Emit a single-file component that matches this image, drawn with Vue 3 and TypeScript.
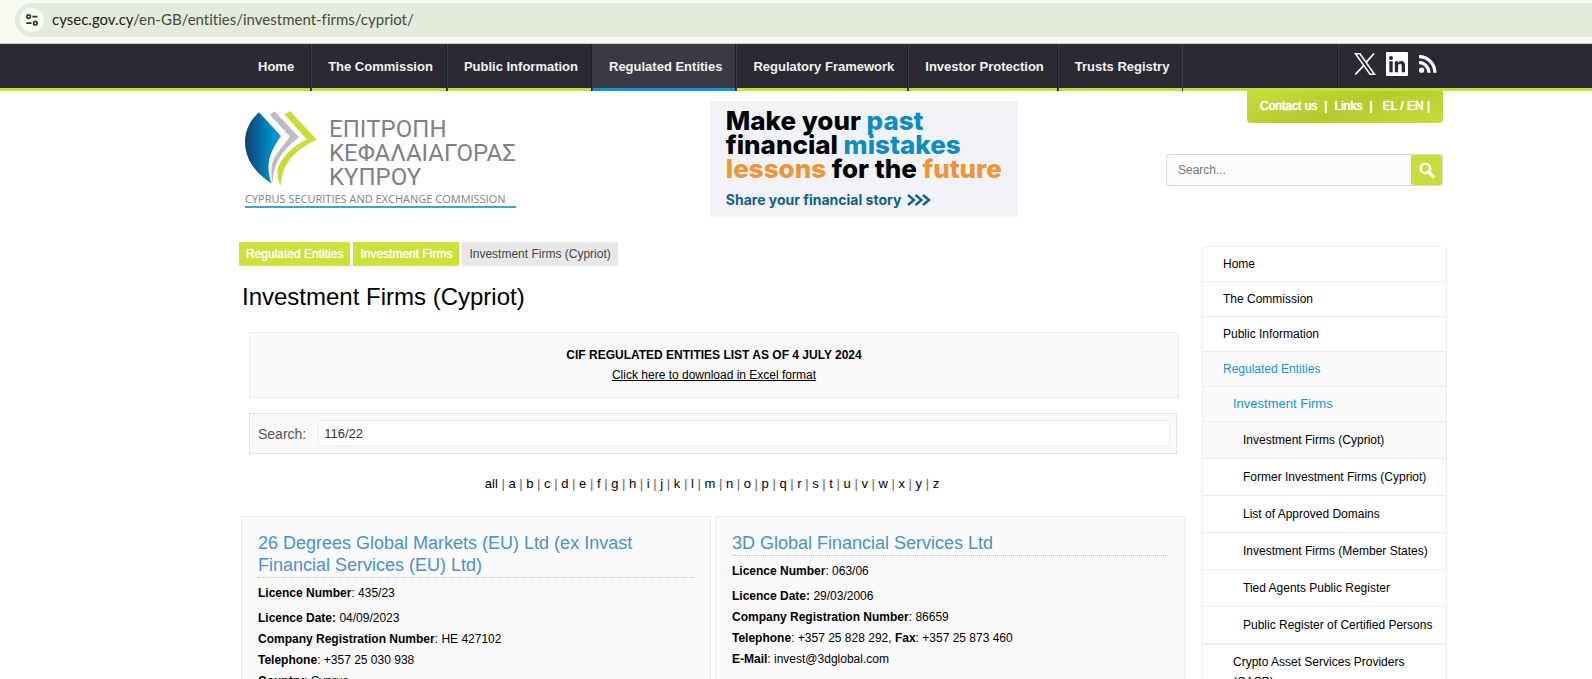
<script setup lang="ts">
import { ref } from 'vue'

interface SideItem {
  label: string
  level: 1 | 2 | 3
  active?: boolean
  shaded?: boolean
  last?: boolean
}

interface Field {
  label: string
  colonBold?: boolean
  value: string
}

interface Firm {
  name: string
  rows: Field[][]
}

const navItems: string[] = [
  'Home',
  'The Commission',
  'Public Information',
  'Regulated Entities',
  'Regulatory Framework',
  'Investor Protection',
  'Trusts Registry',
]
const currentNav = 'Regulated Entities'

const siteSearch = ref('')
const firmSearch = ref('116/22')

const letters: string[] = ['all', ...'abcdefghijklmnopqrstuvwxyz'.split('')]

const sideItems: SideItem[] = [
  { label: 'Home', level: 1 },
  { label: 'The Commission', level: 1 },
  { label: 'Public Information', level: 1 },
  { label: 'Regulated Entities', level: 1, active: true, shaded: true },
  { label: 'Investment Firms', level: 2, active: true, shaded: true },
  { label: 'Investment Firms (Cypriot)', level: 3, shaded: true },
  { label: 'Former Investment Firms (Cypriot)', level: 3 },
  { label: 'List of Approved Domains', level: 3 },
  { label: 'Investment Firms (Member States)', level: 3 },
  { label: 'Tied Agents Public Register', level: 3 },
  { label: 'Public Register of Certified Persons', level: 3, last: true },
  { label: 'Crypto Asset Services Providers (CASP)', level: 2 },
]

const firms: Firm[] = [
  {
    name: '26 Degrees Global Markets (EU) Ltd (ex Invast Financial Services (EU) Ltd)',
    rows: [
      [{ label: 'Licence Number', value: '435/23' }],
      [{ label: 'Licence Date', colonBold: true, value: '04/09/2023' }],
      [{ label: 'Company Registration Number', value: 'HE 427102' }],
      [{ label: 'Telephone', value: '+357 25 030 938' }],
      [{ label: 'Country', value: 'Cyprus' }],
    ],
  },
  {
    name: '3D Global Financial Services Ltd',
    rows: [
      [{ label: 'Licence Number', value: '063/06' }],
      [{ label: 'Licence Date', colonBold: true, value: '29/03/2006' }],
      [{ label: 'Company Registration Number', value: '86659' }],
      [
        { label: 'Telephone', value: '+357 25 828 292' },
        { label: 'Fax', value: '+357 25 873 460' },
      ],
      [{ label: 'E-Mail', value: 'invest@3dglobal.com' }],
    ],
  },
]
</script>

<template>
  <div class="window">
    <div class="address-bar">
      <div class="omnibox">
        <button class="site-info" type="button" aria-label="View site information">
          <svg width="14" height="14" viewBox="0 0 14 14" fill="none" stroke="#30352c" stroke-width="1.7">
            <circle cx="3.6" cy="3.6" r="1.8" />
            <path d="M7.4 3.6H12.6M1.2 10.2H6.6" />
            <circle cx="10.4" cy="10.2" r="1.8" />
          </svg>
        </button>
        <span class="url"><span class="host">cysec.gov.cy</span>/en-GB/entities/investment-firms/cypriot/</span>
      </div>
    </div>

    <div class="page">
      <nav class="main-nav">
        <ul class="nav-list">
          <li v-for="item in navItems" :key="item" :class="{ current: item === currentNav }">
            <a href="#">{{ item }}</a>
          </li>
        </ul>
        <div class="social">
          <a href="#" aria-label="X">
            <svg width="22" height="22" viewBox="0 0 22 22" fill="none" stroke="#fff">
              <path d="M1.5 .8H6L20.5 21.2H16Z" stroke-width="1.5" />
              <path d="M20 .5L12.2 9.4M9.6 12.6L1.2 21.5" stroke-width="1.7" />
            </svg>
          </a>
          <a href="#" aria-label="LinkedIn">
            <svg width="22" height="24" viewBox="0 0 22 24">
              <rect width="22" height="24" rx="1" fill="#fff" />
              <g fill="#2a2a33">
                <circle cx="5" cy="6" r="2" />
                <rect x="3.3" y="9.3" width="3.4" height="11" />
                <path d="M8.8 9.3H12V10.9C12.7 9.7 13.8 9 15.2 9C18 9 19 10.8 19 13.8V20.3H15.7V14.5C15.7 12.8 15.3 11.8 14.1 11.8C12.7 11.8 12.1 12.9 12.1 14.5V20.3H8.8Z" />
              </g>
            </svg>
          </a>
          <a href="#" aria-label="RSS">
            <svg width="20" height="20" viewBox="0 0 20 20" fill="none" stroke="#fff" stroke-width="3.2">
              <circle cx="3.6" cy="16.2" r="2.6" fill="#fff" stroke="none" />
              <path d="M1 8.6C6.5 8.6 10.9 13 10.9 18.8M1 2.6C10 2.6 16.9 9.8 16.9 18.8" />
            </svg>
          </a>
        </div>
      </nav>

      <header class="masthead">
        <a class="logo" href="#">
          <span class="logo-top">
            <svg width="72" height="75" viewBox="0 0 72 75">
              <defs>
                <linearGradient id="leaf" x1="0" y1="0" x2="1" y2="0">
                  <stop offset="0" stop-color="#123f70" />
                  <stop offset=".45" stop-color="#006fa4" />
                  <stop offset="1" stop-color="#00a5e3" />
                </linearGradient>
              </defs>
              <path d="M14 1.3L36 25C26 39 19 53 26.8 72.7C13 64 0 50 0 31C0 19 6 8 14 1.3Z" fill="url(#leaf)" />
              <path d="M29.5 .3L54 26.3C44 34 28 47 28 72C25 62 26 51 31 44C36 37 41 31 45 25.5L25 4Z" fill="#bcbdc3" />
              <path d="M45 0L72 29C58 34 36 49 36 75C31 66 31 57 37 49C43 40 53 32 62 28.5L39.6 3.5Z" fill="#c8dc35" />
            </svg>
            <span class="logo-greek">ΕΠΙΤΡΟΠΗ<br />ΚΕΦΑΛΑΙΑΓΟΡΑΣ<br />ΚΥΠΡΟΥ</span>
          </span>
          <span class="logo-english">CYPRUS SECURITIES AND EXCHANGE COMMISSION</span>
        </a>

        <a class="banner" href="#">
          <span class="banner-copy">
            Make your <span class="blue">past</span><br />
            financial <span class="blue">mistakes</span><br />
            <span class="orange">lessons</span> for the <span class="orange">future</span>
          </span>
          <span class="banner-more">
            Share your financial story
            <svg width="24" height="12" viewBox="0 0 24 12" fill="none" stroke="#145f8a" stroke-width="2.4">
              <path d="M1 1L7 6L1 11M8.5 1L14.5 6L8.5 11M16 1L22 6L16 11" />
            </svg>
          </span>
        </a>

        <div class="tools">
          <div class="quick-links">
            <a href="#">Contact us</a><span>|</span><a href="#">Links</a><span>|</span>
            <span class="lang"><a href="#">EL</a> / <a href="#">EN</a> |</span>
          </div>
          <form class="site-search" @submit.prevent>
            <input v-model="siteSearch" type="text" placeholder="Search..." aria-label="Search the site" />
            <button type="submit" aria-label="Search">
              <svg width="16" height="16" viewBox="0 0 16 16" fill="none" stroke="#fff" stroke-width="2.6">
                <circle cx="6.4" cy="6.4" r="4.7" />
                <path d="M9.8 9.8L14.3 14.6" stroke-width="3.2" stroke-linecap="round" />
              </svg>
            </button>
          </form>
        </div>
      </header>

      <div class="body">
        <main class="content">
          <div class="crumbs">
            <a href="#">Regulated Entities</a>
            <a href="#">Investment Firms</a>
            <span>Investment Firms (Cypriot)</span>
          </div>
          <h1>Investment Firms (Cypriot)</h1>

          <div class="notice">
            <strong>CIF REGULATED ENTITIES LIST AS OF 4 JULY 2024</strong>
            <a href="#">Click here to download in Excel format</a>
          </div>

          <div class="filter">
            <label for="firm-search">Search:</label>
            <input id="firm-search" v-model="firmSearch" type="text" />
          </div>

          <div class="letters">
            <template v-for="(letter, i) in letters" :key="letter">
              <span v-if="i > 0" class="bar"> | </span><a href="#">{{ letter }}</a>
            </template>
          </div>

          <div class="cards">
            <article v-for="firm in firms" :key="firm.name" class="card">
              <h2><a href="#">{{ firm.name }}</a></h2>
              <p v-for="(row, r) in firm.rows" :key="r">
                <template v-for="(field, f) in row" :key="field.label">
                  <template v-if="f > 0">, </template><b>{{ field.label }}<template v-if="field.colonBold">:</template></b><template v-if="!field.colonBold">:</template>&#32;{{ field.value }}</template>
              </p>
            </article>
          </div>
        </main>

        <aside class="sidebar">
          <ul>
            <li
              v-for="item in sideItems"
              :key="item.label"
              :class="['level-' + item.level, { active: item.active, shaded: item.shaded, last: item.last }]"
            >
              <a href="#">{{ item.label }}</a>
            </li>
          </ul>
        </aside>
      </div>
    </div>
  </div>
</template>

<style>
body {
  background: #fff;
}
</style>

<style scoped>
.window {
  display: flex;
  flex-direction: column;
  height: 100vh;
  font-family: "Liberation Sans", Arial, sans-serif;
  font-size: 12px;
  color: #000;
}
.window *,
.window {
  box-sizing: border-box;
}
a {
  color: inherit;
  text-decoration: none;
}
ul {
  list-style: none;
  margin: 0;
  padding: 0;
}

/* browser address bar */
.address-bar {
  flex: none;
  padding: 3px 0 6px 15px;
  background: #f7fbf1;
  border-bottom: 1px solid #cdd2c8;
}
.omnibox {
  display: flex;
  align-items: center;
  gap: 8px;
  height: 34px;
  padding-left: 5px;
  border-radius: 17px 0 0 17px;
  background: #e3ecdb;
}
.site-info {
  display: flex;
  align-items: center;
  justify-content: center;
  width: 24px;
  height: 24px;
  padding: 0;
  border: 0;
  border-radius: 50%;
  background: #f9fcf5;
}
.url {
  padding-bottom: 2px;
  font-family: Lato, "Open Sans", sans-serif;
  font-size: 15px;
  font-variant-ligatures: none;
  line-height: 18px;
  color: #464a43;
}
.host {
  color: #1b1d1a;
}

.page {
  flex: 1;
  min-height: 0;
  overflow-y: auto;
  scrollbar-width: none;
}

/* main navigation */
.main-nav {
  display: flex;
  justify-content: space-between;
  padding: 0 145px 0 241px;
  background: #2a2a33;
  box-shadow: inset 0 -3px #c8dc3a;
}
.nav-list {
  display: flex;
}
.nav-list li {
  border-right: 1px solid #1d1d23;
  border-left: 1px solid #3d3d46;
}
.nav-list li:first-child {
  border-left-color: transparent;
}
.nav-list li:last-child {
  border-right-color: #3d3d46;
}
.nav-list a {
  display: block;
  padding: 2px 13px 0 16px;
  border-bottom: 3px solid #c8dc3a;
  font-size: 13px;
  font-weight: bold;
  line-height: 42px;
  color: #f2f2f2;
  white-space: nowrap;
}
.nav-list li:first-child a {
  padding-right: 16px;
}
.nav-list .current a {
  background: #3a3a43;
  border-bottom-color: #0b96d6;
}
.social {
  display: flex;
  align-items: center;
  gap: 10px;
  margin-bottom: 3px;
  padding: 0 9px 4px 16px;
  border-left: 1px solid #1d1d23;
  box-shadow: inset 1px 0 #3d3d46;
}
.social svg {
  display: block;
}

/* masthead */
.masthead {
  display: grid;
  grid-template-columns: 39% 1fr 277px;
  align-items: start;
  padding: 0 149px 0 241px;
}
.logo {
  justify-self: start;
  margin: 20px 0 0 4px;
  padding-bottom: 1px;
  border-bottom: 2px solid #3aa5cf;
  color: #808185;
}
.logo-top {
  display: flex;
  gap: 12px;
}
.logo-greek {
  padding-top: 6px;
  font-family: Roboto, "Liberation Sans", sans-serif;
  font-size: 24px;
  line-height: 24px;
}
.logo-english {
  display: block;
  padding-top: 4px;
  font-family: "Open Sans", "Liberation Sans", sans-serif;
  font-size: 11px;
  line-height: 12px;
}
.banner {
  display: block;
  width: 308px;
  margin-top: 10px;
  padding: 8px 0 8px 16px;
  background: #f1f3f8;
  white-space: nowrap;
}
.banner-copy {
  display: block;
  font-family: Inter, sans-serif;
  font-size: 26px;
  font-weight: 800;
  line-height: 24px;
}
.blue {
  color: #0d8cc4;
}
.orange {
  color: #f09536;
}
.banner-more {
  display: flex;
  align-items: center;
  gap: 6px;
  margin-top: 10px;
  font-family: Inter, sans-serif;
  font-size: 14px;
  font-weight: 700;
  line-height: 18px;
  color: #145f8a;
}
.tools {
  display: flex;
  flex-direction: column;
  align-items: flex-end;
}
.quick-links {
  display: flex;
  gap: 7px;
  padding: 0 13px 2px 13px;
  border-radius: 0 0 4px 4px;
  background: linear-gradient(160deg, #c8dc3a, #b7ca2c 50%, #c8dc3a);
  line-height: 30px;
  color: #fff;
  text-shadow: 0 0 1px #fff, 0 0 1px #fff;
  white-space: nowrap;
}
.lang {
  padding-left: 3px;
}
.site-search {
  display: flex;
  width: 100%;
  margin-top: 31px;
  border: 1px solid #d9d9d9;
  border-radius: 3px;
  background: #fcfcfc;
}
.site-search input {
  flex: 1;
  min-width: 0;
  height: 30px;
  padding: 0 11px;
  border: 0;
  background: none;
  font: inherit;
}
.site-search input::placeholder {
  color: #757575;
}
.site-search button {
  display: flex;
  align-items: center;
  justify-content: center;
  width: 31px;
  padding: 0;
  border: 0;
  border-radius: 2px;
  background: #c8dc3a;
}

/* body */
.body {
  display: flex;
  align-items: flex-start;
  gap: 17px;
  padding: 25px 145px 40px 239px;
}
.content {
  flex: 1;
  min-width: 0;
}
.crumbs {
  display: flex;
  gap: 3px;
  line-height: 24px;
}
.crumbs a,
.crumbs span {
  padding: 0 7px;
}
.crumbs a {
  background: #cde138;
  color: #fff;
  text-shadow: 0 0 1px #fff;
}
.crumbs span {
  background: #e8e8e8;
  color: #444;
}
h1 {
  margin: 16px 0 20px 3px;
  font-size: 24px;
  font-weight: normal;
  line-height: 30px;
}
.notice {
  margin: 0 6px 0 10px;
  padding: 12px 0;
  border: 1px solid #ececec;
  background: #f9f9f9;
  text-align: center;
  line-height: 20px;
}
.notice strong {
  display: block;
}
.notice a {
  text-decoration: underline;
}
.filter {
  display: flex;
  align-items: center;
  gap: 12px;
  margin: 15px 8px 0 10px;
  padding: 6px 6px 6px 8px;
  border: 1px dotted #ccc;
  background: #f9f9f9;
}
.filter label {
  font-size: 14px;
  color: #555;
}
.filter input {
  flex: 1;
  min-width: 0;
  height: 27px;
  padding: 0 5px;
  border: 1px solid #ececec;
  border-radius: 2px;
  background: #fff;
  color: #333;
  font-family: inherit;
  font-size: 13px;
}
.letters {
  margin: 20px 0 22px;
  text-align: center;
  font-size: 13px;
  line-height: 20px;
  white-space: nowrap;
}
.bar {
  color: #666;
  white-space: pre;
}
.cards {
  display: grid;
  grid-template-columns: 1fr 1fr;
  gap: 4px;
  padding-left: 2px;
}
.card {
  min-height: 200px;
  padding: 15px 16px;
  border: 1px solid #ececec;
  background: #fafafa;
}
.card h2 {
  margin: 0 0 5px;
  padding-bottom: 1px;
  border-bottom: 1px dotted #c3d631;
  font-size: 18px;
  font-weight: normal;
  line-height: 22px;
  color: #4a90d0;
}
.card p {
  margin: 0;
  line-height: 21px;
}
.card h2 + p {
  margin-bottom: 4px;
}
.sidebar {
  flex: none;
  width: 245px;
  margin-top: 4px;
}
.sidebar ul {
  border: 1px solid #ececec;
  border-radius: 3px;
}
.sidebar li {
  padding: 7px 10px 7px 20px;
  border-bottom: 1px solid #ececec;
  line-height: 20px;
}
.sidebar .level-2 {
  padding-left: 30px;
}
.sidebar .level-3 {
  padding: 8px 10px 8px 40px;
}
.sidebar .shaded {
  background: #fafafa;
}
.sidebar .active {
  color: #1693d8;
}
.sidebar .level-2.active {
  font-size: 13px;
}
.sidebar .last {
  border-bottom-width: 2px;
}
</style>
